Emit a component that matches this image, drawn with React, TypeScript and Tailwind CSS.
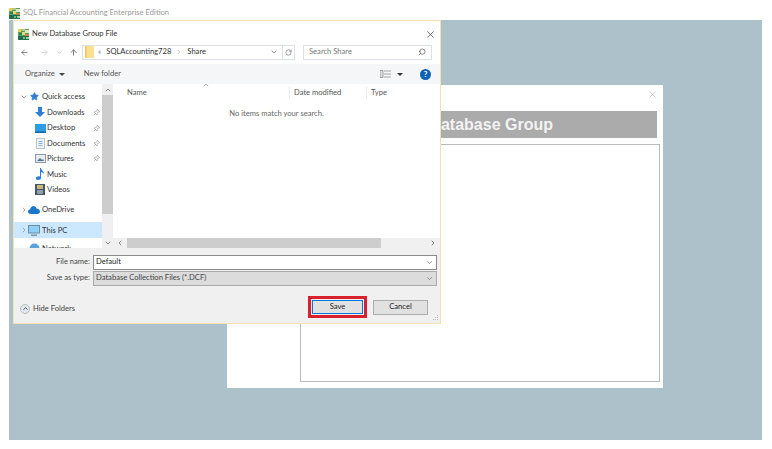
import React from 'react';
import { ArrowLeft, ArrowRight, ArrowUp, ChevronDown, ChevronRight, ChevronLeft, ChevronUp, Pin, RotateCw, Search, Star, X } from 'lucide-react';

const font = "font-['Lato','Open_Sans',sans-serif]";

const AppLogo = () => (
  <svg width="11" height="11" viewBox="0 0 11 11">
    <rect width="11" height="11" fill="#5f9f5f" />
    <rect x="0" y="0" width="3" height="3" fill="#e8d24a" />
    <rect x="3" y="0" width="4" height="2" fill="#a9c98a" />
    <rect x="7" y="1" width="4" height="3" fill="#d8e8c0" />
    <rect x="1" y="4" width="3" height="2" fill="#2f7f4a" />
    <rect x="4" y="3" width="3" height="3" fill="#e4d77a" />
    <rect x="7" y="5" width="4" height="2" fill="#b98a4a" />
    <rect x="0" y="7" width="11" height="4" fill="#1f6f4a" />
    <rect x="5" y="8" width="2" height="2" fill="#7fb58a" />
    <rect x="8" y="8" width="3" height="2" fill="#a8d0a0" />
  </svg>
);

const DownloadsIcon = () => (
  <svg width="10" height="11" viewBox="0 0 10 11">
    <path d="M3 0h4v5h3L5 10 0 5h3z" fill="#2f7fd6" />
  </svg>
);
const DesktopIcon = () => (
  <svg width="11" height="9" viewBox="0 0 11 9">
    <rect width="11" height="9" fill="#2e9be6" />
    <rect y="7.500" width="11" height="1.500" fill="#1667a8" />
  </svg>
);
const DocumentsIcon = () => (
  <svg width="9" height="11" viewBox="0 0 9 11">
    <rect x="0.500" y="0.500" width="8" height="10" fill="#f2f5f8" stroke="#b9c3cc" />
    <path d="M2.500 3.500h4M2.500 5.500h4M2.500 7.500h4" stroke="#7fb2dc" />
  </svg>
);
const PicturesIcon = () => (
  <svg width="11" height="9" viewBox="0 0 11 9">
    <rect x="0.500" y="0.500" width="10" height="8" fill="#e6edf3" stroke="#8b98a5" />
    <path d="M2 7l3-3 2 2 1-1 1 2z" fill="#51718c" />
  </svg>
);
const MusicIcon = () => (
  <svg width="9" height="12" viewBox="0 0 9 12">
    <path d="M4 0h1c0 2 3 3 3 6-1-1-2-2-3-2v6c0 1-1 2-3 2S0 11 0 10s2-2 4-1.500z" fill="#2a7fdc" />
  </svg>
);
const VideosIcon = () => (
  <svg width="10" height="11" viewBox="0 0 10 11">
    <rect width="10" height="11" fill="#4b5560" />
    <rect x="2" y="1" width="6" height="4" fill="#c7b780" />
    <rect x="2" y="6" width="6" height="4" fill="#8aa0b2" />
  </svg>
);
const CloudIcon = () => (
  <svg width="12" height="8" viewBox="0 0 12 8">
    <path d="M3 8C1 8 0 7 0 5.500S1 3.500 2 3.500C2.500 1.500 4 0 5.500 0S8 1 8.500 2.500C10.500 2.500 12 4 12 5.500S11 8 9.500 8z" fill="#1b78c9" />
  </svg>
);
const PcIcon = () => (
  <svg width="12" height="11" viewBox="0 0 12 11">
    <rect x="0.500" y="0.500" width="11" height="7.500" fill="#8fd0f5" stroke="#6b8fa8" />
    <rect x="3" y="9.500" width="6" height="1.500" fill="#7f97a8" />
  </svg>
);
const NetworkIcon = () => (
  <svg width="11" height="11" viewBox="0 0 11 11">
    <circle cx="5.500" cy="5.500" r="5" fill="#5d9fd6" />
  </svg>
);
const FolderIcon = () => (
  <svg width="9" height="12" viewBox="0 0 9 12">
    <rect width="9" height="12" fill="#fbe08f" />
    <rect width="1.500" height="12" fill="#f0c75a" />
  </svg>
);

const NavRow = ({ icon, label, pinned }: { icon: React.ReactNode; label: string; pinned?: boolean }) => (
  <div className="relative flex h-[15.400px] items-center pl-[20px]">
    <span className="flex w-[12px] justify-center">{icon}</span>
    <span className="ml-[1px] text-[7.600px] text-[#333]">{label}</span>
    {pinned && <Pin size={7} className="absolute left-[79px] rotate-45 text-[#888]" />}
  </div>
);

const DialogFooterField = ({ label, value, muted }: { label: string; value: string; muted?: boolean }) => (
  <div className="flex h-[16px] items-center">
    <span className="w-[76px] text-right text-[7.600px] text-[#444]">{label}</span>
    <div className={`ml-[3px] flex h-[15px] w-[344px] items-center justify-between border px-[2px] text-[7.600px] ${muted ? 'border-[#aaa] bg-[#dcdcdc] text-[#444]' : 'border-[#8a8a8a] bg-white text-[#222]'}`}>
      <span>{value}</span>
      <ChevronDown size={9} className="text-[#777]" />
    </div>
  </div>
);

const SaveDialog = () => (
  <div className={`absolute left-[13px] top-[20px] flex h-[304px] w-[428px] flex-col border border-[#f0e3ad] bg-white ${font}`}>
    <div className="flex h-[23px] items-center pl-[4px] pr-[4px] pt-[3px]">
      <AppLogo />
      <span className="ml-[3px] text-[7.600px] text-[#333]">New Database Group File</span>
      <X size={11} strokeWidth={1.5} className="ml-auto text-[#333]" />
    </div>
    <div className="flex h-[16px] items-center pl-[6px] pr-[8px]">
      <ArrowLeft size={9} className="text-[#666]" />
      <ArrowRight size={9} className="ml-[11px] text-[#ccc]" />
      <ChevronDown size={7} className="ml-[7px] text-[#aaa]" />
      <ArrowUp size={9} className="ml-[6px] text-[#555]" />
      <div className="ml-[4px] flex h-[15px] w-[213px] items-center border border-[#dde1e5] pl-[2px] text-[7.600px] text-[#333]">
        <FolderIcon />
        <span className="ml-[4px] text-[#777]">«</span>
        <span className="ml-[5px]">SQLAccounting728</span>
        <ChevronRight size={6} className="mx-[5px] text-[#777]" />
        <span>Share</span>
        <ChevronDown size={8} className="ml-auto mr-[4px] text-[#555]" />
        <div className="flex h-full w-[12px] items-center justify-center border-l border-[#dde1e5]">
          <RotateCw size={7} className="text-[#666]" />
        </div>
      </div>
      <div className="ml-[8px] flex h-[15px] w-[129px] items-center justify-between border border-[#dde1e5] px-[5px] text-[7.600px] text-[#777]">
        <span>Search Share</span>
        <Search size={8} className="-scale-x-100 text-[#555]" />
      </div>
    </div>
    <div className="mt-[4px] flex h-[20px] items-center bg-[#f5f6f7] pl-[11px] pr-[9px] text-[7.600px] text-[#555]">
      <span>Organize</span>
      <span className="ml-[4px] h-0 w-0 border-x-[3px] border-t-[3px] border-x-transparent border-t-[#444]" />
      <span className="ml-[19px]">New folder</span>
      <svg width="11" height="8" viewBox="0 0 11 8" className="ml-auto">
        <path d="M0 .5h3v7H0zM4 1h7M4 4h7M4 7h7" fill="#ddd" stroke="#888" strokeWidth=".7" />
      </svg>
      <span className="ml-[6px] h-0 w-0 border-x-[3px] border-t-[3px] border-x-transparent border-t-[#333]" />
      <span className="ml-[17px] flex h-[11px] w-[11px] items-center justify-center rounded-full bg-[#0f62b4] text-[8px] font-bold text-white">?</span>
    </div>
    <div className="flex h-[164px]">
      <div className="h-full w-[88px] overflow-hidden">
        <div className="flex flex-col pt-[5px]">
          <div className="flex h-[15px] items-center pl-[6px]">
            <ChevronDown size={8} className="text-[#666]" />
            <Star size={9} fill="#2f7fd6" className="ml-[2px] text-[#2f7fd6]" />
            <span className="ml-[3px] text-[7.600px] text-[#333]">Quick access</span>
          </div>
          <div className="pt-[1px]">
            <NavRow icon={<DownloadsIcon />} label="Downloads" pinned />
            <NavRow icon={<DesktopIcon />} label="Desktop" pinned />
            <NavRow icon={<DocumentsIcon />} label="Documents" pinned />
            <NavRow icon={<PicturesIcon />} label="Pictures" pinned />
            <NavRow icon={<MusicIcon />} label="Music" />
            <NavRow icon={<VideosIcon />} label="Videos" />
          </div>
          <div className="mt-[5px] flex h-[15px] items-center pl-[6px]">
            <ChevronRight size={8} className="text-[#888]" />
            <span className="flex w-[12px] justify-center"><CloudIcon /></span>
            <span className="ml-[2px] text-[7.600px] text-[#333]">OneDrive</span>
          </div>
          <div className="mt-[5px] flex h-[16px] items-center bg-[#cce8ff] pl-[6px]">
            <ChevronRight size={8} className="text-[#888]" />
            <span className="flex w-[12px] justify-center"><PcIcon /></span>
            <span className="ml-[2px] text-[7.600px] text-[#333]">This PC</span>
          </div>
          <div className="mt-[3px] flex h-[15px] items-center pl-[14px]">
            <span className="flex w-[12px] justify-center"><NetworkIcon /></span>
            <span className="ml-[2px] text-[7.600px] text-[#333]">Network</span>
          </div>
        </div>
      </div>
      <div className="flex w-[11px] flex-col bg-[#f0f0f0]">
        <ChevronUp size={8} className="mx-auto mt-[2px] text-[#555]" />
        <div className="mt-[1px] h-[119px] bg-[#cdcdcd]" />
        <ChevronDown size={8} className="mx-auto mt-auto mb-[1px] text-[#555]" />
      </div>
      <div className="flex flex-1 flex-col">
        <div className="relative flex h-[17px] items-center pt-[1px] text-[7.600px] text-[#555]">
          <span className="ml-[14px] w-[162px]">Name</span>
          <span className="w-[77px] border-l border-[#eaeaea] pl-[4px]">Date modified</span>
          <span className="border-l border-[#eaeaea] pl-[4px]">Type</span>
          <ChevronUp size={8} className="absolute left-[89px] top-[-3px] text-[#999]" />
        </div>
        <div className="mt-[7px] flex-1 text-center text-[7.600px] text-[#666]">No items match your search.</div>
        <div className="flex h-[10px] items-center bg-[#f0f0f0]">
          <ChevronLeft size={8} className="ml-[3px] text-[#555]" />
          <div className="ml-[3px] h-full w-[254px] bg-[#cdcdcd]" />
          <ChevronRight size={8} className="ml-auto mr-[3px] text-[#444]" />
        </div>
      </div>
    </div>
    <div className="relative flex flex-1 flex-col bg-[#f0f0f0] pt-[6px]">
      <DialogFooterField label="File name:" value="Default" />
      <DialogFooterField label="Save as type:" value="Database Collection Files (*.DCF)" muted />
      <div className="mt-auto flex h-[27px] items-center pb-[5px] pl-[6px] pr-[12px]">
        <span className="mt-[3px] flex h-[10px] w-[10px] items-center justify-center rounded-full border border-[#bbb] bg-[#e3e8ee]">
          <ChevronUp size={7} strokeWidth={3} className="text-[#345]" />
        </span>
        <span className="ml-[3px] mt-[3px] text-[7.600px] text-[#444]">Hide Folders</span>
        <div className="ml-auto border-[3px] border-[#d9202c] p-[1px]">
          <div className="flex h-[14px] w-[51px] items-center justify-center border border-[#0078d7] bg-[#e1e1e1] text-[7.600px] text-[#222]">Save</div>
        </div>
        <div className="ml-[6px] flex h-[15px] w-[55px] items-center justify-center border border-[#adadad] bg-[#e1e1e1] text-[7.600px] text-[#222]">Cancel</div>
      </div>
      <svg width="5" height="5" viewBox="0 0 5 5" className="absolute bottom-[3px] right-[2px]">
        <path d="M4 0h1v1H4zM2 2h1v1H2zM4 2h1v1H4zM0 4h1v1H0zM2 4h1v1H2zM4 4h1v1H4z" fill="#bbb" />
      </svg>
    </div>
  </div>
);

const GroupWindow = () => (
  <div className="absolute left-[227px] top-[85px] flex h-[303px] w-[436px] flex-col bg-white pl-[73px] pr-[3px] font-['Liberation_Sans',sans-serif]">
    <div className="flex h-[26px] justify-end pr-[2px] pt-[4px]">
      <X size={11} strokeWidth={1} className="text-[#999]" />
    </div>
    <div className="mr-[3px] flex h-[27px] items-center justify-center bg-[#ababab] pr-[12px]">
      <span className="whitespace-nowrap text-[16px] font-bold text-[#f2f2f2]">New Database Group</span>
    </div>
    <div className="mt-[6px] h-[238px] border border-[#bbbbbb] bg-white" />
  </div>
);

export default function App() {
  return (
    <div className="h-[449px] w-[772px] overflow-hidden bg-white">
      <div className={`flex h-[20px] items-center pl-[9px] pt-[6px] ${font}`}>
        <AppLogo />
        <span className="ml-[3px] text-[7.600px] text-[#999]">SQL Financial Accounting Enterprise Edition</span>
      </div>
      <div className="ml-[9px] h-[420px] w-[753px] bg-[#adc1cb]" />
      <GroupWindow />
      <SaveDialog />
    </div>
  );
}
